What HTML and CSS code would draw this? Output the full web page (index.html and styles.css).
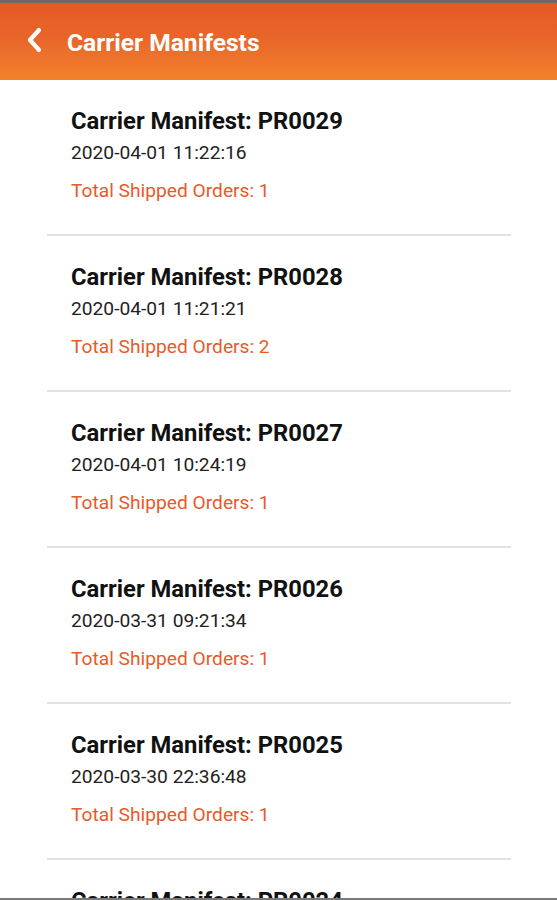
FILE: index.html
```html
<!DOCTYPE html>
<html lang="en">
<head>
    <meta charset="UTF-8">
    <title>Carrier Manifests</title>
    <link rel="stylesheet" href="styles.css">
</head>
<body>
<div class="screen">
    <div class="topbar">
        <span class="back">
            <svg width="20" height="26" viewBox="0 0 20 26">
                <path d="M14 3 L5 13 L14 23" fill="none" stroke="#fff" stroke-width="4.2" stroke-linecap="round" stroke-linejoin="round"/>
            </svg>
        </span>
        <span class="title">Carrier Manifests</span>
    </div>
    <ul class="list">
        <li class="item">
            <div class="name">Carrier Manifest: PR0029</div>
            <div class="date">2020-04-01 11:22:16</div>
            <div class="total">Total Shipped Orders: 1</div>
        </li>
        <li class="item">
            <div class="name">Carrier Manifest: PR0028</div>
            <div class="date">2020-04-01 11:21:21</div>
            <div class="total">Total Shipped Orders: 2</div>
        </li>
        <li class="item">
            <div class="name">Carrier Manifest: PR0027</div>
            <div class="date">2020-04-01 10:24:19</div>
            <div class="total">Total Shipped Orders: 1</div>
        </li>
        <li class="item">
            <div class="name">Carrier Manifest: PR0026</div>
            <div class="date">2020-03-31 09:21:34</div>
            <div class="total">Total Shipped Orders: 1</div>
        </li>
        <li class="item">
            <div class="name">Carrier Manifest: PR0025</div>
            <div class="date">2020-03-30 22:36:48</div>
            <div class="total">Total Shipped Orders: 1</div>
        </li>
        <li class="item">
            <div class="name">Carrier Manifest: PR0024</div>
            <div class="date">2020-03-30 18:02:11</div>
            <div class="total">Total Shipped Orders: 1</div>
        </li>
    </ul>
    <div class="bottomline"></div>
</div>
</body>
</html>
```

FILE: styles.css
```css
* {
    box-sizing: border-box;
}

body {
    margin: 0;
    background-color: #fff;
    font-family: Roboto, "Liberation Sans", sans-serif;
}

div.screen {
    width: 557px;
    height: 900px;
    overflow: hidden;
    position: relative;
}

div.topbar {
    height: 80px;
    border-top: 3px solid #6e6a5e;
    background: linear-gradient(to bottom, #e45a25 0%, #e8652a 45%, #f3822b 100%);
    display: flex;
    align-items: center;
    padding-left: 25px;
    padding-top: 2px;
}

span.back {
    display: flex;
    width: 20px;
    height: 26px;
    margin-right: 22px;
    margin-top: -5px;
}

span.title {
    color: #fff;
    font-size: 24.6px;
    font-weight: bold;
}

ul.list {
    list-style: none;
    margin: 0;
    padding: 0 46px 0 47px;
}

li.item {
    height: 156px;
    padding: 27px 0 0 24px;
    border-bottom: 2px solid #e2e2e2;
}

div.name {
    color: #111;
    font-size: 23.8px;
    font-weight: bold;
    line-height: 28px;
}

div.date {
    color: #222;
    font-size: 19.2px;
    line-height: 24px;
    margin-top: 6px;
}

div.total {
    color: #e85a2a;
    font-size: 19.2px;
    line-height: 24px;
    margin-top: 14px;
}

div.bottomline {
    position: absolute;
    left: 0;
    right: 0;
    bottom: 0;
    height: 2px;
    background-color: #7a7a7a;
}
```
